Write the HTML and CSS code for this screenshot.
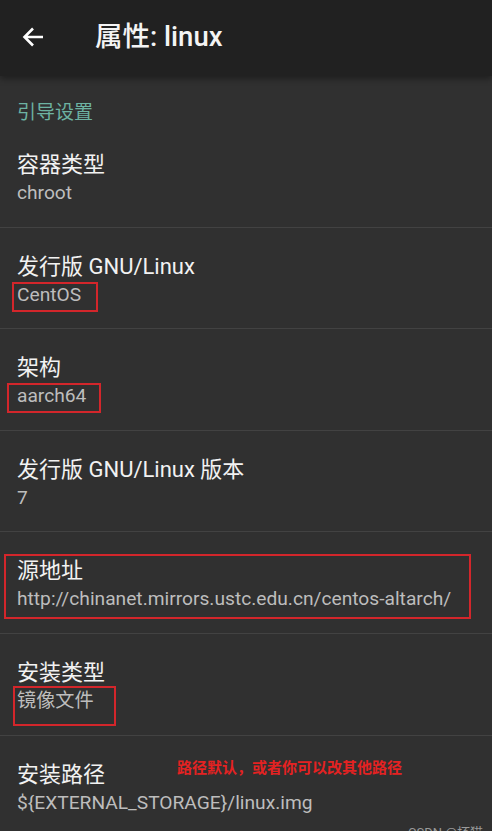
FILE: index.html
```html
<!DOCTYPE html>
<html lang="zh">
<head>
<meta charset="utf-8">
<title>属性: linux</title>
<link rel="stylesheet" href="styles.css">
</head>
<body>
<div class="app">
  <header class="topbar">
    <svg class="back" width="22" height="22" viewBox="0 0 22 22" aria-hidden="true">
      <path d="M21 11H3M11 2.5L2.5 11L11 19.5" fill="none" stroke="#fff" stroke-width="2.6" stroke-linecap="butt" stroke-linejoin="miter"/>
    </svg>
    <h1 class="title">属性: linux</h1>
  </header>
  <main class="list">
    <div class="section">引导设置</div>
    <div class="item">
      <div class="item-title">容器类型</div>
      <div class="item-value">chroot</div>
    </div>
    <div class="item">
      <div class="item-title">发行版 GNU/Linux</div>
      <div class="item-value">CentOS</div>
      <span class="mark mark-distro"></span>
    </div>
    <div class="item">
      <div class="item-title">架构</div>
      <div class="item-value">aarch64</div>
      <span class="mark mark-arch"></span>
    </div>
    <div class="item">
      <div class="item-title">发行版 GNU/Linux 版本</div>
      <div class="item-value">7</div>
    </div>
    <div class="item">
      <div class="item-title">源地址</div>
      <div class="item-value">http://chinanet.mirrors.ustc.edu.cn/centos-altarch/</div>
      <span class="mark mark-source"></span>
    </div>
    <div class="item">
      <div class="item-title">安装类型</div>
      <div class="item-value">镜像文件</div>
      <span class="mark mark-type"></span>
    </div>
    <div class="item item-last">
      <div class="item-title">安装路径</div>
      <div class="item-value">${EXTERNAL_STORAGE}/linux.img</div>
      <span class="note">路径默认，或者你可以改其他路径</span>
    </div>
  </main>
  <span class="watermark">CSDN @坏猫</span>
</div>
</body>
</html>
```

FILE: styles.css
```css
html, body {
  margin: 0;
  padding: 0;
  height: 831px;
  overflow: hidden;
  background: #303030;
}
body {
  font-family: Roboto, "Noto Sans CJK SC", sans-serif;
}
.app {
  position: relative;
  width: 492px;
  height: 831px;
  overflow: hidden;
  background: #303030;
}
.topbar {
  height: 76px;
  background: #212121;
  display: flex;
  align-items: center;
  padding-left: 22px;
  box-shadow: 0 3px 6px rgba(0,0,0,0.35);
  position: relative;
  z-index: 1;
}
.back {
  display: block;
  margin-top: -2px;
}
.title {
  margin: -3px 0 0 51px;
  font-size: 27.5px;
  font-weight: 500;
  color: #f4f4f4;
  line-height: 32px;
}
.section {
  padding: 25px 0 1px 17px;
  height: 24px;
  line-height: 24px;
  font-size: 19px;
  color: #6db3a2;
}
.item {
  position: relative;
  padding: 25px 0 0 17px;
  height: 75.6px;
  border-bottom: 1px solid #424242;
}
.item-title {
  font-size: 22px;
  line-height: 28px;
  color: #f2f2f2;
}
.item-value {
  font-size: 19.2px;
  line-height: 28px;
  color: #bdbdbd;
  white-space: nowrap;
}
.mark {
  position: absolute;
  border: 2px solid #d3262b;
  box-sizing: border-box;
}
.mark-distro { left: 12px; top: 54px; width: 86px; height: 30px; }
.mark-arch { left: 7px; top: 54px; width: 94px; height: 30px; }
.mark-source { left: 4px; top: 22px; width: 467px; height: 65px; }
.mark-type { left: 13px; top: 52px; width: 103px; height: 40px; }
.note {
  position: absolute;
  left: 177px;
  top: 22px;
  font-size: 15px;
  line-height: 20px;
  font-weight: 700;
  color: #e42222;
}
.watermark {
  position: absolute;
  left: 408px;
  top: 825px;
  font-size: 13px;
  line-height: 16px;
  color: #9a9a9a;
}
```
